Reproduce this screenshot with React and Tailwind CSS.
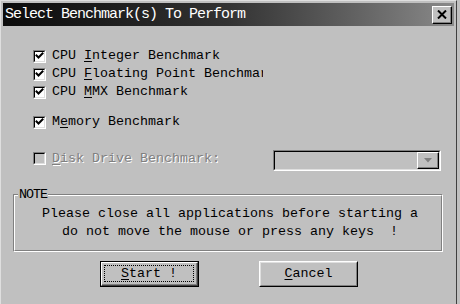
import React from "react";

const mono = { fontFamily: '"Liberation Mono", "DejaVu Sans Mono", monospace' };

function Check({ checked = true, disabled = false }) {
  return (
    <div className="w-[13px] h-[13px] shrink-0 border-t border-l border-t-[#808080] border-l-[#808080] border-r border-b border-r-white border-b-white">
      <div
        className={`w-full h-full border-t border-l border-t-black border-l-black border-r border-b border-r-[#dfdfdf] border-b-[#dfdfdf] ${
          disabled ? "bg-[#c0c0c0]" : "bg-white"
        }`}
      >
        {checked && (
          <svg width="9" height="9" viewBox="0 0 9 9" className="block">
            <path d="M1.5 3.5 L3.5 5.5 L7.5 1.5" stroke="black" strokeWidth="2" fill="none" strokeLinecap="square" />
          </svg>
        )}
      </div>
    </div>
  );
}

function Row({ children, className = "" }) {
  return (
    <div className={`flex items-center h-[18px] ${className}`}>
      <Check />
      <div className="ml-[6px] w-[211px] overflow-hidden whitespace-nowrap text-[13.33px] leading-[18px] text-black">
        {children}
      </div>
    </div>
  );
}

function Btn({ children, isDefault = false }) {
  if (isDefault) {
    return (
      <div className="w-[99px] h-[26px] border border-black">
        <div className="w-full h-full border-t border-l border-t-white border-l-white border-r border-b border-r-[#404040] border-b-[#404040]">
          <div className="w-full h-full border-r border-b border-r-[#808080] border-b-[#808080] p-[2px]">
            <div className="w-full h-full border border-dotted border-black flex items-center justify-center text-[13.33px] text-black">
              {children}
            </div>
          </div>
        </div>
      </div>
    );
  }
  return (
    <div className="w-[99px] h-[26px] border-t border-l border-t-white border-l-white border-r border-b border-r-black border-b-black">
      <div className="w-full h-full border-r border-b border-r-[#808080] border-b-[#808080] border-t border-l border-t-[#dfdfdf] border-l-[#dfdfdf] flex items-center justify-center text-[13.33px] text-black">
        {children}
      </div>
    </div>
  );
}

export default function App() {
  return (
    <div style={mono} className="w-[460px] h-[304px] bg-[#c0c0c0] overflow-hidden">
      <div className="w-[457px] h-[304px] border-t border-l border-t-[#dfdfdf] border-l-[#dfdfdf] border-r border-r-[#404040] pt-[2px] px-[2px]">
        {/* Title bar */}
        <div className="h-[23px] flex items-center bg-linear-to-r from-[#0c0c0c] via-[#333333] to-[#8a8a8a]">
          <div className="pl-[2px] text-white text-[15px] tracking-[-1px] leading-[23px] whitespace-nowrap">
            Select Benchmark(s) To Perform
          </div>
          <div className="ml-auto mr-[2px] w-[20px] h-[18px] border-t border-l border-t-white border-l-white border-r border-b border-r-black border-b-black">
            <div className="w-full h-full bg-[#c0c0c0] border-r border-b border-r-[#808080] border-b-[#808080] flex items-center justify-center">
              <svg width="10" height="9" viewBox="0 0 10 9">
                <path d="M1 0.5 L9 8.5 M9 0.5 L1 8.5" stroke="black" strokeWidth="2" />
              </svg>
            </div>
          </div>
        </div>

        {/* Checkbox list */}
        <div className="pl-[30px] pt-[21px]">
          <Row>
            CPU <span className="underline underline-offset-2">I</span>nteger Benchmark
          </Row>
          <Row>
            CPU <span className="underline underline-offset-2">F</span>loating Point Benchmark
          </Row>
          <Row>
            CPU <span className="underline underline-offset-2">M</span>MX Benchmark
          </Row>
          <Row className="mt-[12px]">
            M<span className="underline underline-offset-2">e</span>mory Benchmark
          </Row>

          {/* Disk row */}
          <div className="flex items-start mt-[19px] h-[21px]">
            <div className="mt-[2px]">
              <Check checked={false} disabled />
            </div>
            <div className="ml-[6px] w-[221px] whitespace-nowrap text-[13.33px] leading-[17px] text-[#808080] [text-shadow:1px_1px_0_#ffffff]">
              <span className="underline underline-offset-2">D</span>isk Drive Benchmark:
            </div>
            <div className="w-[168px] h-[21px] border-t border-l border-t-[#808080] border-l-[#808080] border-r border-b border-r-white border-b-white">
              <div className="w-full h-full border-t border-l border-t-black border-l-black border-r border-b border-r-[#dfdfdf] border-b-[#dfdfdf] flex justify-end">
                <div className="w-[22px] h-full border-t border-l border-t-white border-l-white border-r border-b border-r-black border-b-black">
                  <div className="w-full h-full border-r border-b border-r-[#808080] border-b-[#808080] flex items-center justify-center">
                    <svg width="8" height="5" viewBox="0 0 8 5">
                      <path d="M0 0 L8 0 L4 4.5 Z" fill="#808080" />
                    </svg>
                  </div>
                </div>
              </div>
            </div>
          </div>
        </div>

        {/* Note group */}
        <div className="relative ml-[10px] mt-[23px] w-[430px] h-[58px] border-t border-l border-t-[#808080] border-l-[#808080] border-r border-b border-r-white border-b-white">
          <div className="w-full h-full border-t border-l border-t-white border-l-white border-r border-b border-r-[#808080] border-b-[#808080] flex flex-col items-center pt-[9px] text-[13.33px] leading-[18px] text-black">
            <div className="whitespace-pre pl-[4px]">Please close all applications before starting a</div>
            <div className="whitespace-pre pl-[4px]">do not move the mouse or press any keys  !</div>
          </div>
          <div className="absolute left-[4px] top-[-7px] px-[1px] bg-[#c0c0c0] text-[13.33px] leading-[13px] tracking-[-1px] text-black">
            NOTE
          </div>
        </div>

        {/* Buttons */}
        <div className="flex mt-[9px] pl-[97px] gap-[60px]">
          <Btn isDefault>
            <span>
              <span className="underline underline-offset-2">S</span>tart !
            </span>
          </Btn>
          <Btn>
            <span>
              <span className="underline underline-offset-2">C</span>ancel
            </span>
          </Btn>
        </div>
      </div>
    </div>
  );
}
